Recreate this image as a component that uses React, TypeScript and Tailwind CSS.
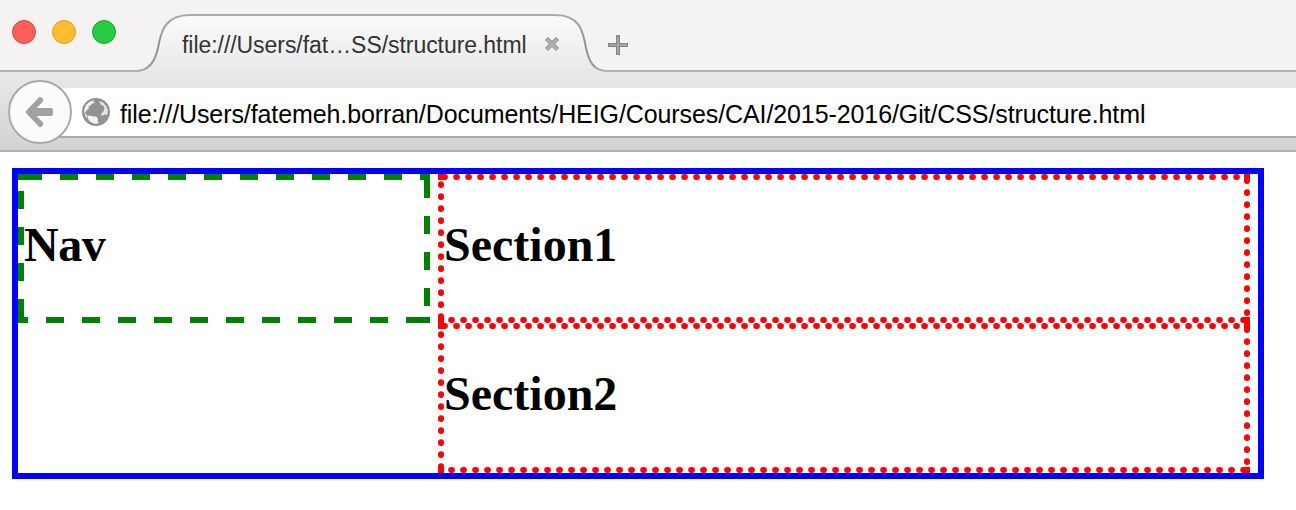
import React from 'react';

function WindowButtons() {
  return (
    <div className="flex gap-4 pl-3 pt-5">
      <span className="size-6 rounded-full border border-[#e2463f] bg-[#ff5f57]" />
      <span className="size-6 rounded-full border border-[#dfa023] bg-[#ffbd2e]" />
      <span className="size-6 rounded-full border border-[#12ac28] bg-[#28ca42]" />
    </div>
  );
}

function TabStrip() {
  return (
    <div className="relative flex h-[72px] bg-[#f5f3f2]">
      <svg className="absolute inset-0" width="1296" height="72" fill="none">
        <defs>
          <linearGradient id="tab" x1="0" y1="0" x2="0" y2="1">
            <stop offset="0" stopColor="#fbfbfb" />
            <stop offset="1" stopColor="#e8e8e8" />
          </linearGradient>
          <linearGradient id="edge" x1="0" y1="14" x2="0" y2="72" gradientUnits="userSpaceOnUse">
            <stop offset="0" stopColor="#aaa" />
            <stop offset="0.6" stopColor="#929292" />
            <stop offset="0.9" stopColor="#999" />
            <stop offset="1" stopColor="#b8b8b8" />
          </linearGradient>
        </defs>
        <path d="M0 71H136C149 71 155 62 158 48C161 31 165 15 190 15H555C580 15 583 31 586 48C589 62 594 71 607 71H1296V73H0Z" fill="url(#tab)" />
        <path d="M0 71H136C149 71 155 62 158 48C161 31 165 15 190 15H555C580 15 583 31 586 48C589 62 594 71 607 71H1296" stroke="url(#edge)" strokeWidth="2" />
      </svg>
      <div className="relative flex w-full">
        <div className="w-[182px]">
          <WindowButtons />
        </div>
        <span className="w-[344px] whitespace-nowrap pt-[30px] text-[23px] leading-[30px] tracking-[-0.05px] text-[#333]">
          file:///Users/fat…SS/structure.html
        </span>
        <svg className="ml-[18px] mt-[36px]" width="16" height="16" viewBox="0 0 16 16">
          <path d="M2.5 2.5L13.5 13.5M13.5 2.5L2.5 13.5" stroke="#929292" strokeWidth="4.4" />
          <path d="M3 3.4L13 13.4M13 3.4L3 13.4" stroke="#b0b0b0" strokeWidth="2.6" />
        </svg>
        <svg className="ml-[48px] mt-[35px]" width="20" height="20" viewBox="0 0 20 20">
          <path d="M8 0h4v8h8v4h-8v8H8v-8H0V8h8z" fill="#858585" />
          <path d="M9 2h2v7h8v2h-8v8H9v-8H1V9h8z" fill="#a5a5a5" />
        </svg>
      </div>
    </div>
  );
}

function Globe() {
  return (
    <svg width="28" height="28" viewBox="0 0 28 28">
      <circle cx="14" cy="14" r="14" fill="#929292" />
      <path d="M2.5 11L4 7L8 3.5L12 2.2L11 4L13.5 4.5L9.5 6L8.5 7.5L6.5 8L7 10L5 12L4 13L3 15L2 14Z" fill="#f4f4f4" />
      <path d="M5 18L8 17.5L11 18.5L14 18.5L16 20.5L15.5 23L17 24.5L14 26L10.5 25L7 22.5Z" fill="#f4f4f4" />
      <path d="M17 3L21 4.5L24.5 8.5L26 13L25 17L22.5 16.5L20 18L19 16L21.5 13.5L22.5 10L21 7.5L18.5 6.5Z" fill="#e4e4e4" />
      <path d="M3 15L5 17L4.5 20L3 18Z" fill="#ddd" />
    </svg>
  );
}

function Toolbar() {
  return (
    <div className="h-20 border-b-2 border-[#b1b1b1] bg-linear-to-b from-[#e9e9e9] to-[#d3d3d3] pt-4">
      <div className="relative ml-10 flex h-[50px] items-center border-b-2 border-[#aaa] bg-white pl-[42px]">
        <div className="absolute left-[-32px] top-[-8px] flex size-16 items-center justify-center rounded-full border-2 border-[#aaa] bg-[#fbfbfb]">
          <svg className="mr-[3px]" width="28" height="32" viewBox="0 0 28 32">
            <path d="M1.5 14.5L13.5 1.8Q15 0 17 1.8L18 3Q19 4.3 17.5 6L11.5 12H25.5Q28 12 28 14V18Q28 20 25.5 20H11.5L17.5 26Q19 27.7 18 29L17 30.2Q15 32 13.5 30.2L1.5 17.5Q0 16 1.5 14.5Z" fill="#a2a2a2" />
          </svg>
        </div>
        <Globe />
        <span className="ml-[10px] whitespace-nowrap pt-[3px] text-[25px] leading-[30px] tracking-[-0.095px] text-black">
          file:///Users/fatemeh.borran/Documents/HEIG/Courses/CAI/2015-2016/Git/CSS/structure.html
        </span>
      </div>
    </div>
  );
}

function DashedFrame() {
  return (
    <svg className="absolute left-0 top-0" width="412" height="149" stroke="#008000" strokeWidth="6" fill="none">
      <path d="M0 3H24M402 3H412M0 146H10M388 146H412" />
      <path d="M42 3H402" strokeDasharray="18 18" />
      <path d="M28 146H388" strokeDasharray="18 18" />
      <path d="M3 17V125" strokeDasharray="18 18" />
      <path d="M3 125V149M409 0V24" />
      <path d="M409 42V149" strokeDasharray="18 18" />
    </svg>
  );
}

function DottedFrame({ second = false }: { second?: boolean }) {
  const h = second ? 150 : 149;
  return (
    <svg className="absolute left-0 top-0" width="812" height={h} stroke="#f00" strokeWidth="6" fill="none">
      <g strokeLinecap="round" strokeDasharray="0.7 11.3">
        <path d="M6.2 3H806" />
        <path d={`M13.2 ${h - 3}H809`} />
        <path d={second ? 'M3 11.2V148' : 'M3 10.2V147'} />
        <path d={second ? 'M809 6.2V146' : 'M809 6.2V147'} />
      </g>
      <path d={`M0 3H6M806 3H812M0 ${h - 3}H6M806 ${h - 3}H812`} />
    </svg>
  );
}

function Page() {
  return (
    <main className="ml-3 mt-4 flex h-[311px] w-[1252px] gap-2 border-[6px] border-[#00f] font-['Liberation_Serif',serif] text-[48px] font-bold leading-[56px] text-black">
      <nav className="relative h-[149px] w-[412px] pl-[6px] pt-[43px]">
        <DashedFrame />
        <h2 className="tracking-[-0.5px]">Nav</h2>
      </nav>
      <div className="w-[812px]">
        <section className="relative h-[149px] pl-[6px] pt-[43px]">
          <DottedFrame />
          <h2>Section1</h2>
        </section>
        <section className="relative h-[150px] pl-[6px] pt-[43px]">
          <DottedFrame second />
          <h2>Section2</h2>
        </section>
      </div>
    </main>
  );
}

export default function App() {
  return (
    <div className="h-[510px] w-[1296px] overflow-hidden bg-white font-['Liberation_Sans',sans-serif]">
      <TabStrip />
      <Toolbar />
      <Page />
    </div>
  );
}
